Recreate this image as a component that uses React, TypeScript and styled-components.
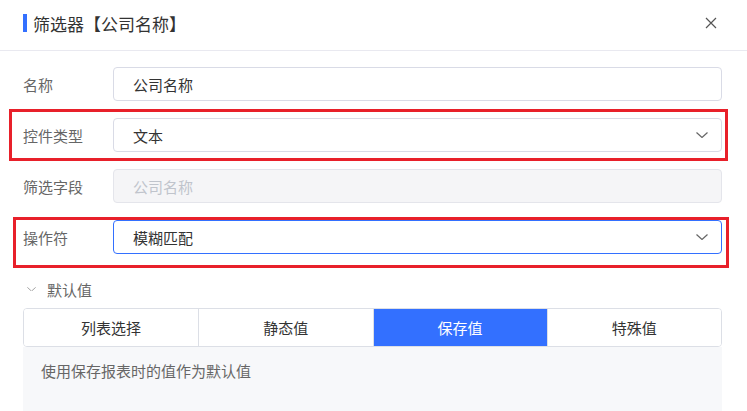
import React, { useState } from "react";
import styled, { createGlobalStyle } from "styled-components";

const GlobalStyle = createGlobalStyle`
  html, body {
    margin: 0;
    padding: 0;
    background: #fff;
    font-family: "Noto Sans CJK SC", "Noto Sans", "Liberation Sans", sans-serif;
  }
  * { box-sizing: border-box; }
`;

type Outline = { top: number; right: number; bottom: number; left: number };

const Panel = styled.div`
  width: 747px;
  height: 411px;
  overflow: hidden;
  background: #fff;
`;

const Header = styled.div`
  height: 51px;
  display: flex;
  align-items: center;
  justify-content: space-between;
  padding: 0 29px 4px 23px;
  border-bottom: 1px solid #e9e9f0;
`;

const Title = styled.div`
  display: flex;
  align-items: center;
  gap: 6px;
  font-size: 17px;
  color: #333;
  &::before {
    content: "";
    width: 4px;
    height: 18px;
    background: #3370ff;
  }
`;

const CloseBtn = styled.button`
  border: 0;
  background: none;
  padding: 0;
  width: 14px;
  height: 14px;
  display: flex;
  align-items: center;
  justify-content: center;
  cursor: pointer;
  color: #555;
`;

const Body = styled.div`
  padding: 16px 25px 0 23px;
`;

const Rows = styled.div`
  display: flex;
  flex-direction: column;
  gap: 17px;
`;

const Row = styled.div<{ $outline?: Outline }>`
  position: relative;
  display: flex;
  align-items: center;
  height: 34px;
  &::after {
    content: "";
    display: ${({ $outline }) => ($outline ? "block" : "none")};
    position: absolute;
    top: ${({ $outline }) => ($outline ? -$outline.top : 0)}px;
    bottom: ${({ $outline }) => ($outline ? -$outline.bottom : 0)}px;
    left: ${({ $outline }) => ($outline ? -$outline.left : 0)}px;
    right: ${({ $outline }) => ($outline ? -$outline.right : 0)}px;
    border: 3px solid #e8202a;
    pointer-events: none;
  }
`;

const Label = styled.div`
  width: 90px;
  flex-shrink: 0;
  font-size: 15px;
  color: #666;
`;

const Field = styled.div<{ $disabled?: boolean; $focused?: boolean }>`
  flex: 1;
  height: 34px;
  display: flex;
  align-items: center;
  justify-content: space-between;
  padding: 0 13px 0 19px;
  border: 1px solid
    ${({ $disabled, $focused }) =>
      $focused ? "#3370ff" : $disabled ? "#e4e5eb" : "#d9dbe6"};
  border-radius: 4px;
  background: ${({ $disabled }) => ($disabled ? "#f5f5f7" : "#fff")};
  font-size: 15px;
  color: ${({ $disabled }) => ($disabled ? "#c0c4cc" : "#333")};
`;

const SectionHead = styled.div`
  display: flex;
  align-items: center;
  gap: 11px;
  height: 18px;
  margin: 26px 0 10px 4px;
  font-size: 15px;
  color: #666;
`;

const Tabs = styled.div`
  display: grid;
  grid-template-columns: repeat(4, 1fr);
  height: 39px;
  border: 1px solid #dcdfe6;
  border-radius: 4px;
  overflow: hidden;
`;

const Tab = styled.div<{ $active?: boolean }>`
  display: flex;
  align-items: center;
  justify-content: center;
  font-size: 15px;
  color: ${({ $active }) => ($active ? "#fff" : "#333")};
  background: ${({ $active }) => ($active ? "#3370ff" : "#fff")};
  & + & {
    border-left: 1px solid #dcdfe6;
  }
`;

const TabPanel = styled.div`
  height: 80px;
  background: #f7f8fa;
  padding: 14px 18px;
  font-size: 15px;
  line-height: 20px;
  color: #666;
`;

const Chevron = ({ size = 12, color = "#666" }: { size?: number; color?: string }) => (
  <svg width={size} height={size / 2} viewBox="0 0 12 6" fill="none">
    <path d="M0.5 0.5 L6 5.5 L11.5 0.5" stroke={color} strokeWidth="1.2" />
  </svg>
);

const tabs = ["列表选择", "静态值", "保存值", "特殊值"];

export default function App() {
  const [active, setActive] = useState(2);
  return (
    <Panel>
      <GlobalStyle />
      <Header>
        <Title>筛选器【公司名称】</Title>
        <CloseBtn aria-label="close">
          <svg width="12" height="12" viewBox="0 0 12 12">
            <path d="M1 1 L11 11 M11 1 L1 11" stroke="#555" strokeWidth="1.2" />
          </svg>
        </CloseBtn>
      </Header>
      <Body>
        <Rows>
          <Row>
            <Label>名称</Label>
            <Field>公司名称</Field>
          </Row>
          <Row $outline={{ top: 9, bottom: 9, left: 14, right: 6 }}>
            <Label>控件类型</Label>
            <Field>
              文本
              <Chevron />
            </Field>
          </Row>
          <Row>
            <Label>筛选字段</Label>
            <Field $disabled>公司名称</Field>
          </Row>
          <Row $outline={{ top: 3, bottom: 14, left: 10, right: 7 }}>
            <Label>操作符</Label>
            <Field $focused>
              模糊匹配
              <Chevron />
            </Field>
          </Row>
        </Rows>
        <SectionHead>
          <Chevron size={9} color="#999" />
          默认值
        </SectionHead>
        <Tabs>
          {tabs.map((t, i) => (
            <Tab key={t} $active={i === active} onClick={() => setActive(i)}>
              {t}
            </Tab>
          ))}
        </Tabs>
        <TabPanel>使用保存报表时的值作为默认值</TabPanel>
      </Body>
    </Panel>
  );
}
